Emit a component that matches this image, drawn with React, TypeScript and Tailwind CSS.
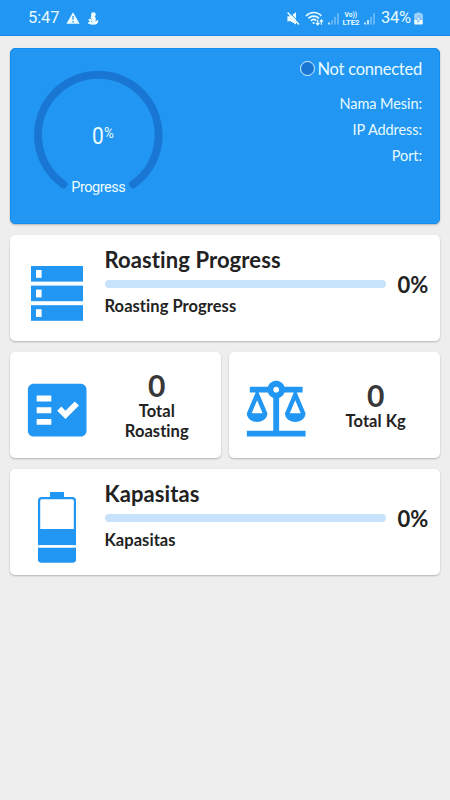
import React from 'react';
import { MdBalance, MdFactCheck } from 'react-icons/md';

const connectionInfo = ['Nama Mesin:', 'IP Address:', 'Port:'];

const StatusBar: React.FC = () => (
  <header className="flex h-9 items-center justify-between border-b border-[#1c86e0] bg-[#2196f3] pt-[2px] pr-[27px] pl-[28px] font-[Roboto,sans-serif] text-white">
    <div className="flex items-center">
      <span className="w-[31px] text-[16.5px] leading-none tracking-[-0.1px] text-[#e6fbff]">5:47</span>
      <svg className="ml-[7px]" width="14" height="13" viewBox="0 0 14 13">
        <path d="M7 0.2 L13.6 11.8 H0.4 Z" fill="#effcff" />
        <path d="M7 4 V7.8 M7 9 V10.4" stroke="#2196f3" strokeWidth="1.3" />
      </svg>
      <svg className="ml-[7px]" width="12" height="14" viewBox="0 0 12 14">
        <circle cx="6.4" cy="2.6" r="2.4" fill="#effcff" />
        <path d="M4.2 3.6 L8 4.4 Q9.6 7 8.4 9.4 L10.4 8 L11.4 8.8 C11 12.2 8.5 13 6 12.8 C3.2 12.7 1 12 0.7 10.6 L3 9.8 L1 7.4 L3.6 6.6 Z" fill="#effcff" />
        <path d="M3 6.4 L5 7.6 M4 9.4 L5.4 10" stroke="#2196f3" strokeWidth="0.7" />
      </svg>
    </div>
    <div className="flex items-center">
      <svg width="13" height="14" viewBox="0 0 13 14">
        <path d="M0.4 4.2 H3.4 L9 0.2 V12.6 L3.4 9.2 H0.4 Z" fill="#effcff" />
        <path d="M2.2 0 L12.8 11.2" stroke="#2196f3" strokeWidth="1" />
        <path d="M0.6 0.6 L12 12.6" stroke="#effcff" strokeWidth="1.5" />
      </svg>
      <svg className="ml-[5px]" width="19" height="15" viewBox="0 0 19 15" fill="none" stroke="#e6fbff">
        <path d="M1 5 C5.4 0.4 12.2 0.4 16.4 5" strokeWidth="1.6" />
        <path d="M3.4 7.4 C6.4 4.4 11 4.4 14 7.4" strokeWidth="1.6" />
        <path d="M5.8 9.9 C7.6 8.1 9.8 8.1 11.4 9.6" strokeWidth="1.6" />
        <circle cx="8.6" cy="12" r="1.1" fill="#e6fbff" stroke="none" />
        <path d="M12.7 8.8 V13.6 M11 12 L12.7 13.8 L14.4 12 M16.4 13.8 V9 M14.8 10.6 L16.4 8.9 L18 10.6" strokeWidth="1.2" />
      </svg>
      <svg className="ml-1" width="12" height="14" viewBox="0 0 12 14">
        <path d="M0.2 10.6 H1.8 V12.6 H0.2 Z" fill="#e6fbff" />
        <path d="M3.2 8.1 H4.8 V12.6 H3.2 Z M6.2 4.8 H7.8 V12.6 H6.2 Z M9.2 1.2 H10.8 V12.6 H9.2 Z" fill="#74bdf7" />
      </svg>
      <svg className="ml-[2px] font-[Roboto,sans-serif]" width="18" height="16" viewBox="0 0 18 16" fill="#e6fbff">
        <text x="2.6" y="6.2" fontSize="7.4" fontWeight="700" textLength="12.6" lengthAdjust="spacingAndGlyphs">Vo))</text>
        <text x="0.6" y="14.2" fontSize="7.6" fontWeight="700" textLength="17" lengthAdjust="spacingAndGlyphs">LTE2</text>
      </svg>
      <svg className="ml-1" width="12" height="14" viewBox="0 0 12 14">
        <path d="M0.2 10.6 H1.8 V12.6 H0.2 Z M3.2 8.1 H4.8 V12.6 H3.2 Z" fill="#e6fbff" />
        <path d="M6.2 4.8 H7.8 V12.6 H6.2 Z M9.2 1.2 H10.8 V12.6 H9.2 Z" fill="#74bdf7" />
      </svg>
      <span className="ml-[5px] w-[33px] text-[16.5px] leading-none tracking-[-0.3px] text-[#e6fbff]">34%</span>
      <svg width="9" height="13" viewBox="0 0 9 13">
        <path d="M2.6 0.4 H6.4 V1.6 H8 Q8.8 1.6 8.8 2.6 V8 H0.2 V2.6 Q0.2 1.6 1 1.6 H2.6 Z" fill="#9fd3fb" />
        <path d="M0.2 8 H8.8 V11.6 Q8.8 12.6 8 12.6 H1 Q0.2 12.6 0.2 11.6 Z" fill="#effcff" />
        <path d="M5 3.2 L2 7.6 H4.2 L3.8 10.6 L7 6.2 H4.8 Z" fill="#ffffff" stroke="#3f9fee" strokeWidth="0.6" />
      </svg>
    </div>
  </header>
);

const Gauge: React.FC = () => (
  <svg width="130" height="130" viewBox="33 70.3 130 130">
    <path
      d="M63.4 184.6 A60.3 60.3 0 1 1 133.2 184.6"
      fill="none"
      stroke="#1976d2"
      strokeWidth="8"
      strokeLinecap="round"
    />
    <g className="font-[Roboto,sans-serif]" fill="#ecfcff">
      <text x="92" y="144" fontSize="24" textLength="11.8" lengthAdjust="spacingAndGlyphs">0</text>
      <text x="103.9" y="138" fontSize="14.5" textLength="9.8" lengthAdjust="spacingAndGlyphs">%</text>
      <text x="71.2" y="192.8" fontSize="14.5" textLength="54.5">Progress</text>
    </g>
  </svg>
);

const ServerIcon: React.FC = () => (
  <svg width="52" height="55" viewBox="0 0 52 55">
    {[0, 19.6, 39.2].map((y) => (
      <g key={y}>
        <rect x="0" y={y} width="52" height="15.6" fill="#2196f3" />
        <rect x="5" y={y + 4} width="5.6" height="7.8" fill="#fff" />
      </g>
    ))}
  </svg>
);

const BatteryIcon: React.FC = () => (
  <svg width="38" height="71" viewBox="0 0 38 71">
    <rect x="12" y="0" width="14" height="6" fill="#2196f3" />
    <rect x="1.1" y="6.1" width="35.8" height="63.2" rx="2.6" fill="#fff" stroke="#2196f3" strokeWidth="2.2" />
    <rect x="0" y="37" width="38" height="16.2" fill="#2196f3" />
    <rect x="0" y="53.2" width="38" height="2.6" fill="#fff" />
    <path d="M0 55.8 H38 V67.4 Q38 70.4 35 70.4 H3 Q0 70.4 0 67.4 Z" fill="#2196f3" />
  </svg>
);

interface ProgressCardProps {
  title: string;
  icon: React.ReactNode;
  percent: number;
}

const ProgressCard: React.FC<ProgressCardProps> = ({ title, icon, percent }) => (
  <section className="flex h-[106px] rounded-[5px] bg-white pr-3 shadow-[0_1px_2px_rgba(0,0,0,0.25)]">
    <div className="flex w-[94.5px] shrink-0 justify-center">{icon}</div>
    <div className="flex-1 pt-3">
      <h2 className="text-[22px] leading-[26px] font-bold tracking-[0.1px] whitespace-nowrap">{title}</h2>
      <div className="mt-[7px] h-2 overflow-hidden rounded-full bg-[#c7e3fb]">
        <div className="h-full bg-[#2196f3]" style={{ width: `${percent}%` }} />
      </div>
      <p className="mt-[8.5px] text-[16.5px] leading-5 font-bold tracking-[0.05px]">{title}</p>
    </div>
    <span className="w-[42px] pt-9 text-right text-[22px] leading-[28px] font-bold tracking-[-0.2px]">{percent}%</span>
  </section>
);

interface TotalCardProps {
  value: number;
  icon: React.ReactNode;
  children: React.ReactNode;
}

const TotalCard: React.FC<TotalCardProps> = ({ value, icon, children }) => (
  <section className="flex h-[106px] flex-1 items-center rounded-[5px] bg-white shadow-[0_1px_2px_rgba(0,0,0,0.25)]">
    <div className="flex w-[95px] shrink-0 justify-center pt-[11px] text-[#2196f3]">{icon}</div>
    <div className="flex-1 pr-[12.5px] text-center">
      <div className="text-[30px] leading-[32px] font-bold text-[#383838]">{value}</div>
      <div className="text-[16.5px] leading-5 font-bold tracking-[0.05px]">{children}</div>
    </div>
  </section>
);

const App: React.FC = () => {
  return (
    <div className="h-[800px] w-[450px] overflow-hidden bg-[#eeeeee] font-[Lato,sans-serif] text-[#222222] [font-variant-ligatures:none]">
      <StatusBar />
      <main className="flex flex-col gap-[11px] px-[10px] pt-[11.5px]">
        {/* Machine connection */}
        <section className="flex h-[176px] justify-between rounded-[5px] border border-[#0f8df0] bg-[#2196f3] pr-[17px] pl-[22px] shadow-[0_1px_2px_rgba(0,0,0,0.25)]">
          <div className="pt-[21.5px]">
            <Gauge />
          </div>
          <div className="flex flex-col items-end pt-[9px] text-[#e8fbff]">
            <div className="flex items-center gap-[2px] text-[16.5px] leading-[22px] tracking-[-0.23px]">
              <span className="h-[15px] w-[15px] rounded-full border-[1.5px] border-[#d8f3ff] bg-[#1976d2]" />
              Not connected
            </div>
            <div className="mt-[11px] text-right text-[14.5px] leading-[26.2px] tracking-[-0.08px]">
              {connectionInfo.map((label) => (
                <p key={label}>{label}</p>
              ))}
            </div>
          </div>
        </section>

        <ProgressCard
          title="Roasting Progress"
          percent={0}
          icon={<div className="pt-[31px]"><ServerIcon /></div>}
        />

        <div className="flex gap-2">
          <TotalCard value={0} icon={<MdFactCheck size={70.4} />}>
            Total
            <br />
            Roasting
          </TotalCard>
          <TotalCard value={0} icon={<MdBalance size={70.4} />}>Total Kg</TotalCard>
        </div>

        <ProgressCard
          title="Kapasitas"
          percent={0}
          icon={<div className="pt-[23px]"><BatteryIcon /></div>}
        />
      </main>
    </div>
  );
};

export default App;
